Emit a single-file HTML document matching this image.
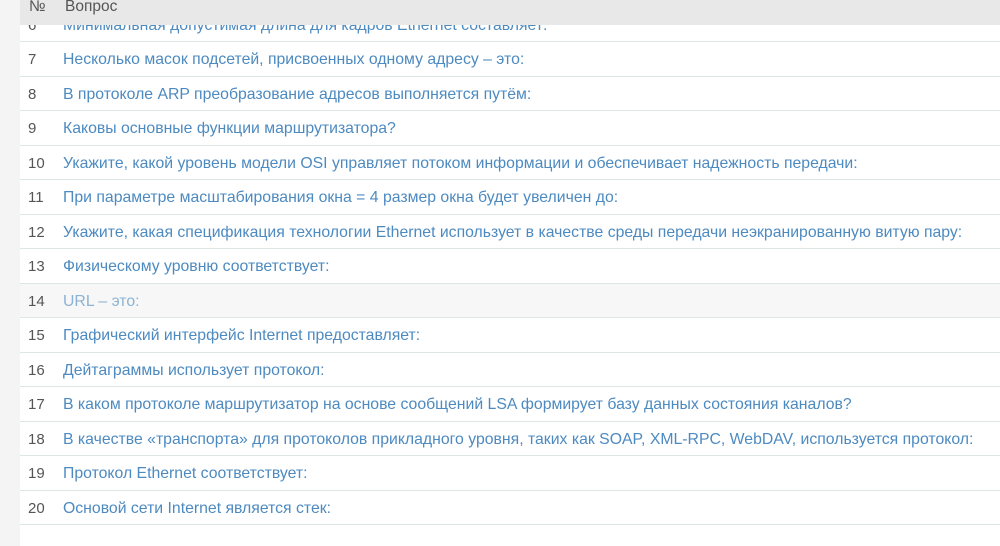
<!DOCTYPE html>
<html><head><meta charset="utf-8"><style>
body{margin:0;width:1000px;height:546px;overflow:hidden;background:#fff;font-family:"Liberation Sans",sans-serif;position:relative}
.strip{position:absolute;left:0;top:0;width:20px;height:546px;background:#f4f4f4}
.rows{position:absolute;left:20px;top:7.5px;width:980px}
.r{height:33.5px;border-bottom:1px solid #dbe6e5;position:relative;font-size:15.8px;line-height:36px}
.r.h{background:#f7f7f7}
.n{position:absolute;left:8px;color:#555;font-size:15px}
.t{position:absolute;left:43px;color:#4d8ac0;white-space:nowrap}
.h .t{color:#8ab3d5}
.hd{position:absolute;left:20px;top:0;width:980px;height:25px;background:#e8e8e8;font-size:15.5px;color:#555;line-height:14px}
.hd span{position:absolute;top:0}
</style></head><body>
<div class="strip"></div>
<div class="rows">
<div class="r"><span class="n">6</span><span class="t">Минимальная допустимая длина для кадров Ethernet составляет:</span></div>
<div class="r"><span class="n">7</span><span class="t">Несколько масок подсетей, присвоенных одному адресу – это:</span></div>
<div class="r"><span class="n">8</span><span class="t">В протоколе ARP преобразование адресов выполняется путём:</span></div>
<div class="r"><span class="n">9</span><span class="t">Каковы основные функции маршрутизатора?</span></div>
<div class="r"><span class="n">10</span><span class="t">Укажите, какой уровень модели OSI управляет потоком информации и обеспечивает надежность передачи:</span></div>
<div class="r"><span class="n">11</span><span class="t">При параметре масштабирования окна = 4 размер окна будет увеличен до:</span></div>
<div class="r"><span class="n">12</span><span class="t">Укажите, какая спецификация технологии Ethernet использует в качестве среды передачи неэкранированную витую пару:</span></div>
<div class="r"><span class="n">13</span><span class="t">Физическому уровню соответствует:</span></div>
<div class="r h"><span class="n">14</span><span class="t">URL – это:</span></div>
<div class="r"><span class="n">15</span><span class="t">Графический интерфейс Internet предоставляет:</span></div>
<div class="r"><span class="n">16</span><span class="t">Дейтаграммы использует протокол:</span></div>
<div class="r"><span class="n">17</span><span class="t">В каком протоколе маршрутизатор на основе сообщений LSA формирует базу данных состояния каналов?</span></div>
<div class="r"><span class="n">18</span><span class="t">В качестве «транспорта» для протоколов прикладного уровня, таких как SOAP, XML-RPC, WebDAV, используется протокол:</span></div>
<div class="r"><span class="n">19</span><span class="t">Протокол Ethernet соответствует:</span></div>
<div class="r"><span class="n">20</span><span class="t">Основой сети Internet является стек:</span></div>
</div>
<div class="hd"><span style="left:9px">№</span><span style="left:45px">Вопрос</span></div>
</body></html>
